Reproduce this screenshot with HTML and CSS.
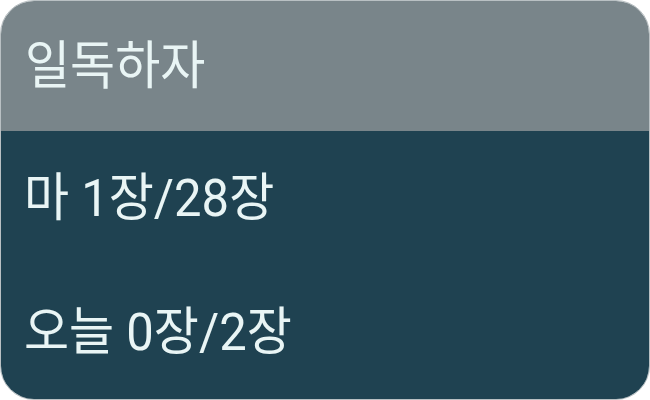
FILE: index.html
```html
<!DOCTYPE html>
<html lang="ko">
<head>
<meta charset="utf-8">
<link rel="stylesheet" href="styles.css">
</head>
<body>
<div class="card">
  <div class="header"><span class="txt">일독하자</span></div>
  <div class="content">
    <div class="row"><span class="txt">마 1장/28장</span></div>
    <div class="row"><span class="txt">오늘 0장/2장</span></div>
  </div>
</div>
</body>
</html>
```
FILE: styles.css
```css
html, body {
  margin: 0;
  padding: 0;
  background: #ffffff;
}
.card {
  width: 650px;
  height: 400px;
  box-sizing: border-box;
  border-radius: 34px;
  overflow: hidden;
  border: 1px solid #b9c0c3;
  display: flex;
  flex-direction: column;
  font-family: Roboto, "Noto Sans CJK KR", sans-serif;
  color: #e9f5f5;
}
.header {
  height: 130px;
  flex: none;
  background: #79858a;
  display: flex;
  align-items: center;
  padding-left: 24px;
}
.content {
  flex: 1;
  background: #1f4251;
  display: flex;
  flex-direction: column;
}
.row {
  flex: 1;
  display: flex;
  align-items: center;
  padding-left: 23px;
}
.txt {
  font-size: 49px;
  line-height: 1;
  display: inline-block;
  transform: scaleY(1.06);
}
```
